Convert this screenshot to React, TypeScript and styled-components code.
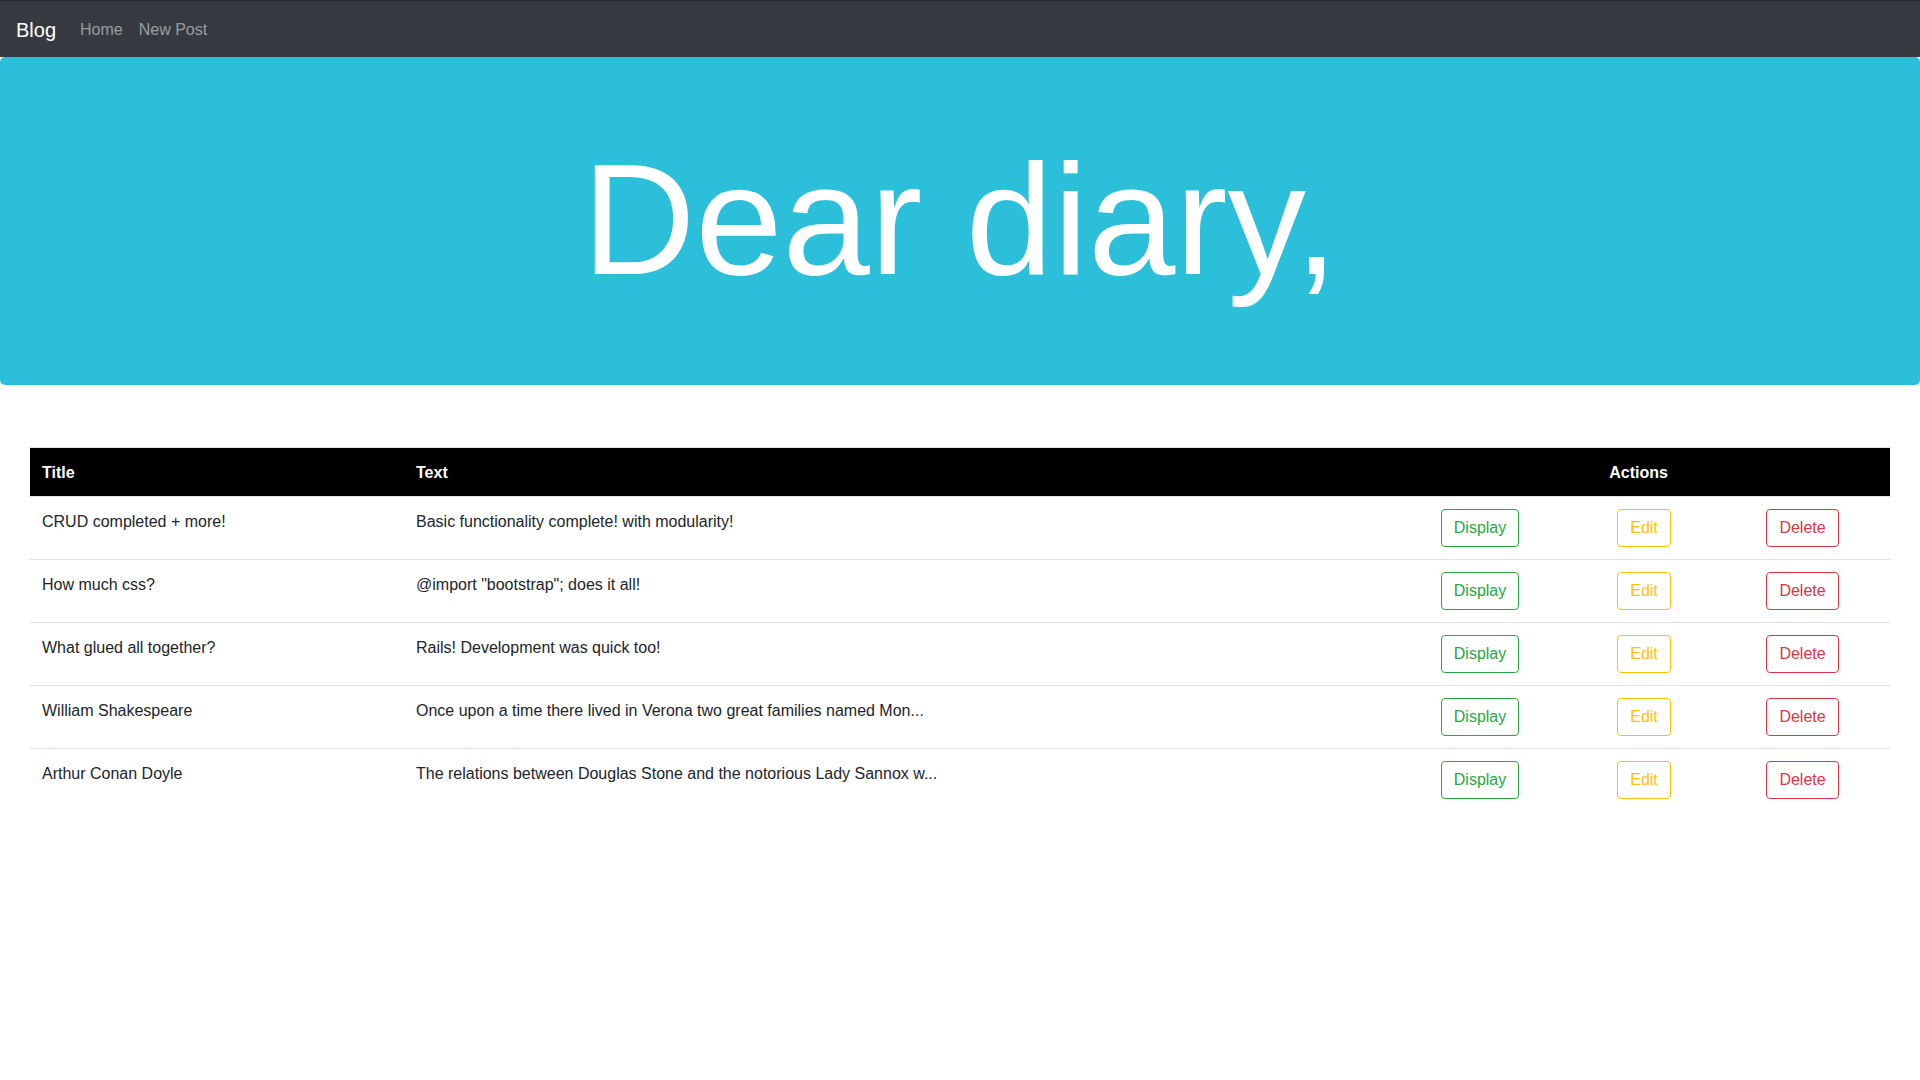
import React from "react";
import styled, { createGlobalStyle } from "styled-components";

const GlobalStyle = createGlobalStyle`
  html, body {
    margin: 0;
    padding: 0;
    background: #ffffff;
  }
  body {
    font-family: "Liberation Sans", Arial, "Helvetica Neue", sans-serif;
    font-size: 16px;
    line-height: 1.5;
    color: #212529;
  }
  * { box-sizing: border-box; }
`;

const Page = styled.div`
  display: flex;
  flex-direction: column;
  min-height: 1080px;
`;

const Navbar = styled.nav`
  display: flex;
  align-items: center;
  height: 57px;
  padding: 1px 16px 0;
  background: #343a40;
  border-top: 1px solid #24282c;
`;

const Brand = styled.a`
  font-size: 20px;
  line-height: 30px;
  padding: 5px 0;
  margin-right: 16px;
  color: #ffffff;
  text-decoration: none;
`;

const NavLinks = styled.div`
  display: flex;
  align-items: center;
`;

const NavLink = styled.a`
  padding: 8px;
  font-size: 16px;
  line-height: 24px;
  color: rgba(255, 255, 255, 0.5);
  text-decoration: none;
`;

const Jumbotron = styled.header`
  background: #2cbfd9;
  border-radius: 5px;
  padding: 69px 32px 71px;
  text-align: center;
`;

const Heading = styled.h1`
  margin: 0;
  font-size: 157px;
  line-height: 1.2;
  font-weight: 300;
  color: #ffffff;
`;

const Main = styled.main`
  padding: 62px 30px 0;
`;

const Table = styled.table`
  width: 100%;
  table-layout: fixed;
  border-collapse: collapse;
`;

const Col = styled.col<{ $w: number }>`
  width: ${(p) => p.$w}px;
`;

const HeadCell = styled.th<{ $center?: boolean }>`
  background: #000000;
  color: #ffffff;
  font-weight: 700;
  text-align: ${(p) => (p.$center ? "center" : "left")};
  padding: 13px 12px 11px;
  line-height: 24px;
  border-top: 1px solid #dee2e6;
  border-bottom: 1px solid #dee2e6;
`;

const Row = styled.tr`
  &:first-child td {
    border-top: none;
  }
`;

const Cell = styled.td<{ $center?: boolean }>`
  padding: 12px;
  line-height: 24px;
  vertical-align: top;
  border-top: 1px solid #dee2e6;
  text-align: ${(p) => (p.$center ? "center" : "left")};
  white-space: nowrap;
`;

const CellText = styled.span`
  display: inline-block;
  padding-top: 1px;
`;

const OutlineButton = styled.a<{ $color: string }>`
  display: inline-block;
  padding: 6px 12px;
  font-size: 16px;
  line-height: 24px;
  border: 1px solid ${(p) => p.$color};
  border-radius: 4px;
  color: ${(p) => p.$color};
  background: transparent;
  text-decoration: none;
  cursor: pointer;
`;

const posts = [
  { title: "CRUD completed + more!", text: "Basic functionality complete! with modularity!" },
  { title: "How much css?", text: '@import "bootstrap"; does it all!' },
  { title: "What glued all together?", text: "Rails! Development was quick too!" },
  { title: "William Shakespeare", text: "Once upon a time there lived in Verona two great families named Mon..." },
  { title: "Arthur Conan Doyle", text: "The relations between Douglas Stone and the notorious Lady Sannox w..." },
];

export default function App() {
  return (
    <Page>
      <GlobalStyle />
      <Navbar>
        <Brand href="#">Blog</Brand>
        <NavLinks>
          <NavLink href="#">Home</NavLink>
          <NavLink href="#">New Post</NavLink>
        </NavLinks>
      </Navbar>
      <Jumbotron>
        <Heading>Dear diary,</Heading>
      </Jumbotron>
      <Main>
        <Table>
          <colgroup>
            <Col $w={374} />
            <Col $w={983} />
            <Col $w={186} />
            <Col $w={142} />
            <Col $w={175} />
          </colgroup>
          <thead>
            <tr>
              <HeadCell>Title</HeadCell>
              <HeadCell>Text</HeadCell>
              <HeadCell $center colSpan={3}>
                Actions
              </HeadCell>
            </tr>
          </thead>
          <tbody>
            {posts.map((p) => (
              <Row key={p.title}>
                <Cell>
                  <CellText>{p.title}</CellText>
                </Cell>
                <Cell>
                  <CellText>{p.text}</CellText>
                </Cell>
                <Cell $center>
                  <OutlineButton $color="#28a745">Display</OutlineButton>
                </Cell>
                <Cell $center>
                  <OutlineButton $color="#ffc107">Edit</OutlineButton>
                </Cell>
                <Cell $center>
                  <OutlineButton $color="#dc3545">Delete</OutlineButton>
                </Cell>
              </Row>
            ))}
          </tbody>
        </Table>
      </Main>
    </Page>
  );
}
